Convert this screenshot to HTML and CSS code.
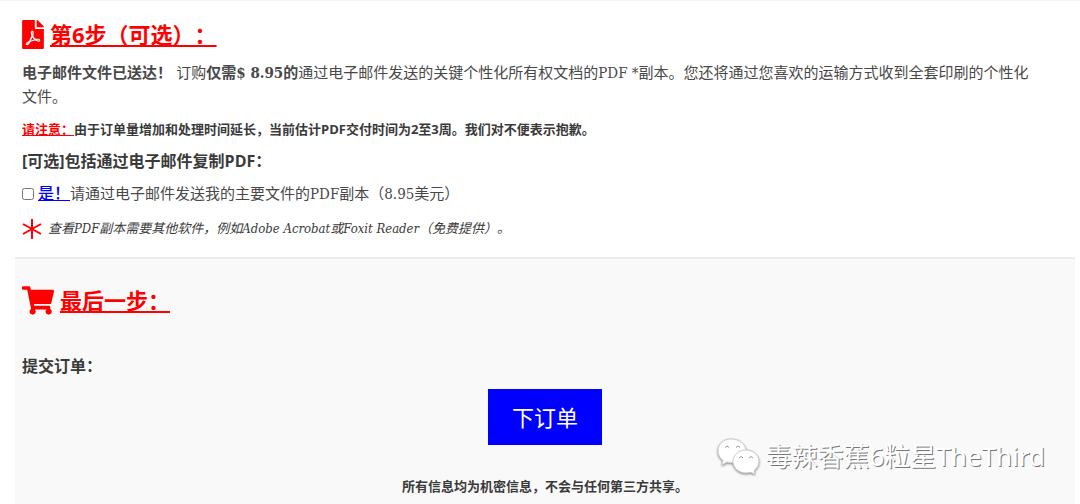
FILE: index.html
```html
<!DOCTYPE html>
<html lang="zh-CN">
<head>
    <meta charset="UTF-8">
    <meta name="viewport" content="width=device-width, initial-scale=1.0">
    <title>提交订单</title>
    <link rel="stylesheet" href="styles.css">
</head>
<body>
    <form class="order-form">
        <section class="step">
            <h2 class="step-title">
                <svg class="icon-pdf" viewBox="0 0 384 512" aria-hidden="true"><path d="M181.9 256.1c-5-16-4.9-46.9-2-46.9 8.4 0 7.6 36.9 2 46.9zm-1.7 47.2c-7.7 20.2-17.3 43.3-28.4 62.7 18.3-7 39-17.2 62.9-21.9-12.7-9.6-24.9-23.4-34.5-40.8zM86.1 428.1c0 .8 13.2-5.4 34.9-40.2-6.7 6.3-29.1 24.5-34.9 40.2zM248 160h136v328c0 13.3-10.7 24-24 24H24c-13.3 0-24-10.7-24-24V24C0 10.7 10.7 0 24 0h200v136c0 13.2 10.8 24 24 24zm-8 171.8c-20-12.2-33.3-29-42.7-53.8 4.5-18.5 11.6-46.6 6.2-64.2-4.7-29.4-42.4-26.5-47.8-6.8-5 18.3-.4 44.1 8.1 77-11.6 27.6-28.7 64.6-40.8 85.8-.1 0-.1.1-.2.1-27.1 13.9-73.6 44.5-54.5 68 5.6 6.9 16 10 21.5 10 17.9 0 35.7-18 61.1-61.8 25.8-8.5 54.1-19.1 79-23.2 21.7 11.8 47.1 19.5 64 19.5 29.2 0 31.2-32 19.7-43.4-13.9-13.6-54.3-9.7-73.6-7.2zM377 105L279 7c-4.5-4.5-10.6-7-17-7h-6v128h128v-6.1c0-6.3-2.5-12.4-7-16.9zm-74.1 255.3c4.1-2.7-2.5-11.9-42.8-9 37.1 15.8 42.8 9 42.8 9z"/></svg>
                <span class="step-name">第6步（可选）：</span>
            </h2>
            <p class="intro"><strong>电子邮件文件已送达！</strong> 订购<strong>仅需$ 8.95的</strong>通过电子邮件发送的关键个性化所有权文档的PDF *副本。您还将通过您喜欢的运输方式收到全套印刷的个性化<br>文件。</p>
            <p class="notice"><span class="notice-label">请注意：</span>由于订单量增加和处理时间延长，当前估计PDF交付时间为2至3周。我们对不便表示抱歉。</p>
            <h3 class="field-title">[可选]包括通过电子邮件复制PDF：</h3>
            <div class="option">
                <input type="checkbox" id="pdfCopy" name="pdfCopy">
                <label for="pdfCopy"><span class="yes">是！</span>请通过电子邮件发送我的主要文件的PDF副本（8.95美元）</label>
            </div>
            <p class="footnote">
                <svg class="icon-star" viewBox="0 0 20 20" aria-hidden="true"><path d="M10 0v20M1 5l18 10M19 5L1 15"/></svg>
                <em>查看PDF副本需要其他软件，例如Adobe Acrobat或Foxit Reader（免费提供）。</em>
            </p>
        </section>

        <section class="step step-final">
            <h2 class="step-title">
                <svg class="icon-cart" viewBox="0 0 576 512" aria-hidden="true"><path d="M528.12 301.319l47.273-208C578.806 78.301 567.391 64 551.99 64H159.208l-9.166-44.81C147.758 8.021 137.93 0 126.529 0H24C10.745 0 0 10.745 0 24v16c0 13.255 10.745 24 24 24h69.883l70.248 343.435C147.325 417.1 136 435.222 136 456c0 30.928 25.072 56 56 56s56-25.072 56-56c0-15.674-6.447-29.835-16.824-40h209.647C430.447 426.165 424 440.326 424 456c0 30.928 25.072 56 56 56s56-25.072 56-56c0-22.172-12.888-41.332-31.579-50.405l5.517-24.276c3.413-15.018-8.002-29.319-23.403-29.319H218.117l-6.545-32h293.145c11.206 0 20.92-7.754 23.403-18.681z"/></svg>
                <span class="step-name">最后一步：</span>
            </h2>
            <h3 class="field-title">提交订单：</h3>
            <button type="submit" class="order-btn">下订单</button>
            <p class="privacy">所有信息均为机密信息，不会与任何第三方共享。</p>
        </section>
    </form>

    <div class="watermark">
        <svg class="icon-chat" viewBox="0 0 42 36" aria-hidden="true">
            <path class="bubble" d="M14 1C6.500 1 1 6 1 13c0 4 2 7 5 9.500L5 27l5-3c1.500.5 3 .7 4.500.7C22 24.700 29 20 29 13S22 1 14 1z"/>
            <path class="bubble" d="M29 12c-7 0-13 5-13 11.500S22 35 29 35c1.500 0 3-.3 4.300-.7L38 36l-1-3.500c3-2.200 5-5.500 5-9C42 17 36 12 29 12z"/>
            <path class="eye" d="M8 9.500q2-3 4 0M19 9.500q2-3 4 0M22 20q2-3 4 0M32 20q2-3 4 0"/>
        </svg>
        <span>毒辣香蕉6粒星TheThird</span>
    </div>
</body>
</html>
```
FILE: styles.css
```css
* {
    box-sizing: border-box;
}
body {
    font-family: 'Open Sans', 'Noto Sans CJK SC', sans-serif;
    background-color: white;
    border-top: 1px solid #f4f4f4;
    margin: 0;
    color: #3a3a3a;
    text-spacing-trim: space-all;
}
h2, h3, p {
    margin: 0;
}
.order-form {
    display: flex;
    flex-direction: column;
    min-height: calc(100vh - 1px);
    margin: 0 5px 0 15px;
}
.step {
    display: flex;
    flex-direction: column;
    padding: 15px 7px 12px;
}
.step-title {
    display: flex;
    align-items: center;
    gap: 6px;
    color: red;
    fill: red;
    font-size: 22px;
    line-height: 36px;
}
.step-name {
    text-decoration: underline;
}
.icon-pdf {
    width: 22px;
    height: 29px;
}
.icon-cart {
    width: 32px;
    height: 29px;
}
.intro {
    margin-top: 9px;
    font-family: 'DejaVu Serif Condensed', 'Noto Sans CJK SC', serif;
    font-size: 15px;
    line-height: 24px;
    color: #484848;
}
.notice {
    margin-top: 8px;
    font-size: 13px;
    font-weight: bold;
    line-height: 24px;
}
.notice-label {
    color: red;
    text-decoration: underline;
}
.field-title {
    margin-top: 8px;
    font-size: 16px;
    line-height: 24px;
}
.option {
    display: flex;
    align-items: center;
    gap: 4px;
    margin-top: 9px;
    font-family: 'DejaVu Serif Condensed', 'Noto Sans CJK SC', serif;
    font-size: 15px;
    line-height: 24px;
    color: #484848;
}
.option input {
    width: 12px;
    height: 12px;
    margin: 0;
}
.yes {
    color: blue;
    font-size: 16px;
    font-weight: 500;
    text-decoration: underline;
}
.footnote {
    display: flex;
    align-items: center;
    gap: 6px;
    margin-top: 11px;
    font-family: 'DejaVu Serif Condensed', 'Noto Sans CJK SC', serif;
    font-size: 13px;
    line-height: 24px;
}
.icon-star {
    width: 20px;
    height: 20px;
    fill: none;
    stroke: red;
    stroke-width: 2;
}
.step-final {
    flex: 1;
    margin-top: 4px;
    padding-bottom: 4px;
    padding-top: 23px;
    border-top: 2px solid #ececec;
    background-color: #f9f9f9;
}
.step-final .field-title {
    margin-top: 36px;
}
.order-btn {
    align-self: center;
    margin-top: 11px;
    padding: 12px 24px;
    border: none;
    background-color: blue;
    color: white;
    font-family: inherit;
    font-size: 22px;
    line-height: 32px;
    cursor: pointer;
}
.privacy {
    margin-top: 29px;
    font-size: 13px;
    font-weight: bold;
    line-height: 24px;
    text-align: center;
}
.watermark {
    position: absolute;
    right: 35px;
    bottom: 30px;
    display: flex;
    align-items: center;
    gap: 6px;
    color: white;
    font-family: 'Noto Sans', 'Noto Sans CJK SC', sans-serif;
    font-size: 26px;
    line-height: 36px;
    text-shadow: 1px 1px 0 #777;
}
.icon-chat {
    width: 42px;
    height: 36px;
    overflow: visible;
    filter: drop-shadow(0 1px 1px #888);
}
.bubble {
    fill: white;
    stroke: #ccc;
    stroke-width: 1;
}
.eye {
    fill: none;
    stroke: #999;
    stroke-width: 1;
}
```
